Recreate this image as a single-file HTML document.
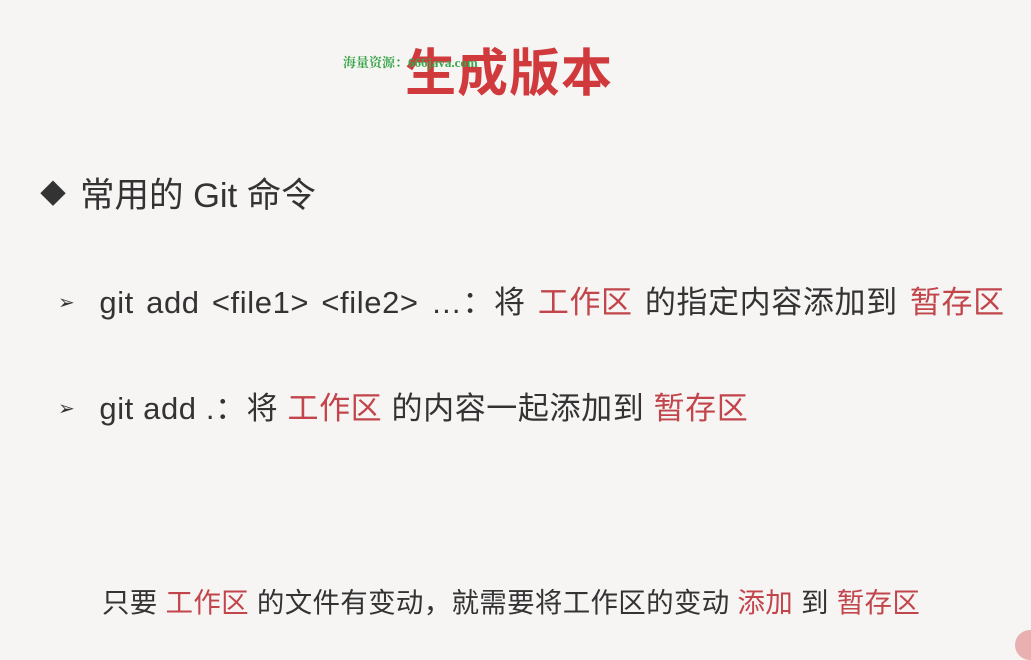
<!DOCTYPE html>
<html><head><meta charset="utf-8"><style>
body{margin:0;width:1031px;height:637px;background:#f7f5f4;position:relative;overflow:hidden;font-family:"Liberation Sans","Noto Sans CJK SC",sans-serif;color:#333;}
.a{position:absolute;white-space:nowrap;}
.r{color:#c2454b;}
.t{left:405px;top:32px;font-size:51px;font-weight:bold;color:#d03a3d;letter-spacing:1px;}
.w{left:343px;top:52px;font-size:13px;color:#3aa64a;font-family:"Liberation Serif","Noto Serif CJK SC",serif;font-weight:bold;}
.h{left:40px;top:167px;font-size:34.5px;}
.b{font-size:31px;letter-spacing:0.6px;}
</style></head><body>
<div class="a t">生成版本</div>
<div class="a w">海量资源：666java.com</div>
<div class="a h"><span style="font-size:26px;margin-right:14px;vertical-align:4px">◆</span>常用的 Git 命令</div>
<div class="a b" style="left:58px;top:277px;word-spacing:3px"><span style="font-size:20px;margin-right:24px;vertical-align:4px">➢</span>git add &lt;file1&gt; &lt;file2&gt; …：将 <span class="r">工作区</span> 的指定内容添加到 <span class="r">暂存区</span></div>
<div class="a b" style="left:58px;top:383px"><span style="font-size:20px;margin-right:24px;vertical-align:4px">➢</span>git add .：将 <span class="r">工作区</span> 的内容一起添加到 <span class="r">暂存区</span></div>
<div class="a" style="left:102px;top:580px;font-size:27.5px;letter-spacing:0.3px">只要 <span class="r">工作区</span> 的文件有变动，就需要将工作区的变动 <span class="r">添加</span> 到 <span class="r">暂存区</span></div>
<div class="a" style="left:1015px;top:630px;width:30px;height:30px;border-radius:50%;background:#e8b0b0"></div>
</body></html>
